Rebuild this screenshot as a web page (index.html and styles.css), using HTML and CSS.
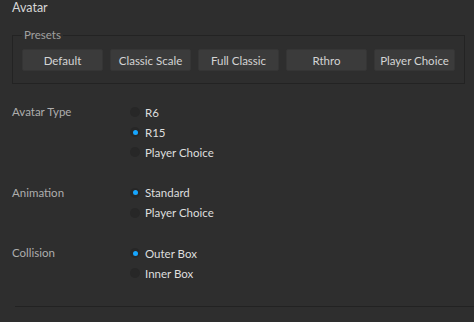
FILE: index.html
```html
<!DOCTYPE html>
<html>
<head>
<meta charset="utf-8">
<link rel="stylesheet" href="styles.css">
</head>
<body>
<div class="title">Avatar</div>
<fieldset class="presets">
  <legend>Presets</legend>
  <div class="buttons">
    <button class="btn">Default</button>
    <button class="btn">Classic Scale</button>
    <button class="btn">Full Classic</button>
    <button class="btn">Rthro</button>
    <button class="btn">Player Choice</button>
  </div>
</fieldset>
<div class="sections">
  <div class="section">
    <div class="label">Avatar Type</div>
    <div class="options">
      <div class="opt"><span class="radio"></span>R6</div>
      <div class="opt"><span class="radio on"></span>R15</div>
      <div class="opt"><span class="radio"></span>Player Choice</div>
    </div>
  </div>
  <div class="section">
    <div class="label">Animation</div>
    <div class="options">
      <div class="opt"><span class="radio on"></span>Standard</div>
      <div class="opt"><span class="radio"></span>Player Choice</div>
    </div>
  </div>
  <div class="section">
    <div class="label">Collision</div>
    <div class="options">
      <div class="opt"><span class="radio on"></span>Outer Box</div>
      <div class="opt"><span class="radio"></span>Inner Box</div>
    </div>
  </div>
</div>
<div class="footer"></div>
</body>
</html>
```
FILE: styles.css
```css
html, body {
  margin: 0;
  padding: 0;
  background: #2e2e2e;
  width: 474px;
  height: 322px;
  overflow: hidden;
  font-family: Lato, "Noto Sans", sans-serif;
  font-size: 11.5px;
}
.title {
  height: 16px;
  line-height: 16px;
  padding-left: 12px;
  font-size: 12.5px;
  color: #d6d6d6;
  margin-bottom: 12px;
}
.presets {
  margin: 0 9px 0 12px;
  padding: 7px 9px 12px 9px;
  border: 1px solid #232323;
  min-width: 0;
}
.presets legend {
  padding: 0 2px;
  line-height: 14px;
  color: #a0a0a0;
  font-size: 11.5px;
}
.buttons {
  display: flex;
  gap: 7px;
}
.btn {
  width: 81px;
  height: 22px;
  margin: 0;
  padding: 0;
  background: #3b3b3b;
  border: 1px solid #353535;
  border-radius: 2px;
  color: #d4d4d4;
  font-family: inherit;
  font-size: 11.5px;
}
.sections {
  margin-top: 18px;
  display: flex;
  flex-direction: column;
  gap: 20.5px;
}
.section {
  display: flex;
}
.label {
  width: 118px;
  padding-left: 12px;
  height: 20px;
  line-height: 20px;
  color: #adadad;
}
.options {
  display: flex;
  flex-direction: column;
}
.opt {
  height: 20px;
  display: flex;
  align-items: center;
  color: #dedede;
}
.radio {
  width: 10px;
  height: 10px;
  border-radius: 50%;
  background: #272727;
  margin-right: 5px;
  display: flex;
  align-items: center;
  justify-content: center;
}
.radio.on::after {
  content: "";
  width: 5px;
  height: 5px;
  border-radius: 50%;
  background: #16a6ff;
}
.footer {
  position: absolute;
  left: 15px;
  right: 0;
  top: 306px;
  border-top: 1px solid #222;
}
```
